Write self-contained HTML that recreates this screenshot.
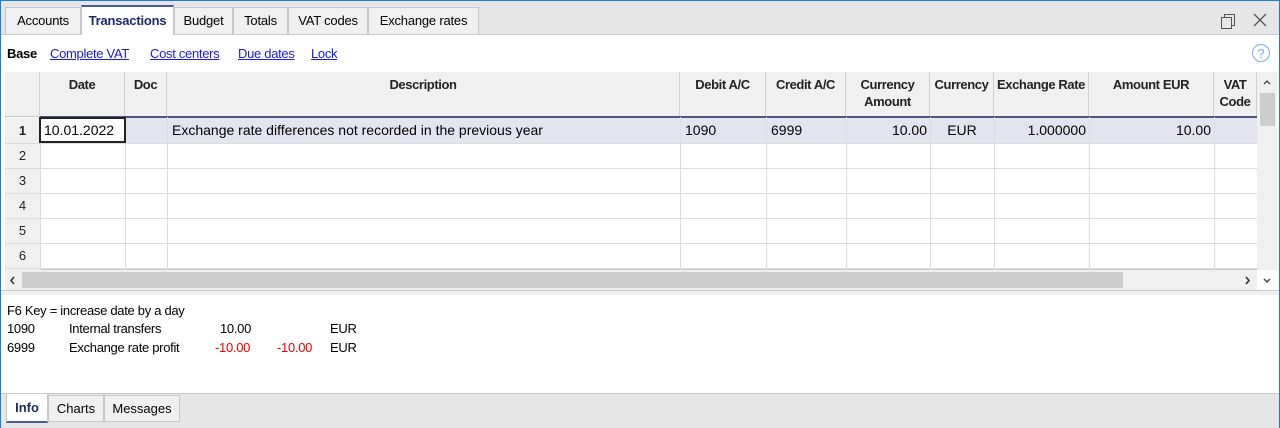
<!DOCTYPE html><html><head><style>
*{box-sizing:border-box;margin:0;padding:0}
body{width:1280px;height:428px;overflow:hidden;background:#fff;font-family:"Liberation Sans",sans-serif;font-size:13px;color:#000;position:relative}
.a{position:absolute}
.frame{left:0;top:0;width:1280px;height:428px;border:1px solid #1e7bd6;border-bottom:none}
.tab{position:absolute;top:7px;height:27px;border:1px solid #c8c8c8;border-bottom:none;background:#f0f0f0;font-size:13px;text-align:center;line-height:26px;letter-spacing:-0.2px}
.h{position:absolute;top:72px;height:45px;background:#f0f0f0;border-right:1px solid #d0d0d0;border-bottom:1px solid #c8c8c8;font-weight:bold;font-size:13px;text-align:center;padding-top:4px;line-height:17px;color:#222;letter-spacing:-0.4px}
.vl{position:absolute;top:117px;height:153px;width:1px;background:#dcdcdc}
.hl{position:absolute;left:5px;width:1252px;height:1px;background:#dcdcdc}
.rn{position:absolute;left:5px;width:35px;text-align:center;font-size:13px;color:#222;background:#f0f0f0}
.c{position:absolute;top:117px;height:26px;line-height:26px;font-size:14px}
.btab{position:absolute;top:395px;height:27px;border:1px solid #c8c8c8;background:#f0f0f0;line-height:25px;text-align:center;font-size:13px}
.i{letter-spacing:-0.3px}
</style></head><body>
<div class="a" style="left:0;top:0;width:1280px;height:35px;background:#e6e6e6;border-bottom:1px solid #c8c8c8"></div>
<div class="tab" style="left:5px;width:76px">Accounts</div>
<div class="tab" style="left:81px;width:93px;background:#fff;top:5px;height:30px;border-top:2px solid #4a5aa0;color:#1b2a6b;font-weight:bold;line-height:28px">Transactions</div>
<div class="tab" style="left:174px;width:59px">Budget</div>
<div class="tab" style="left:233px;width:55px">Totals</div>
<div class="tab" style="left:288px;width:80px">VAT codes</div>
<div class="tab" style="left:368px;width:111px">Exchange rates</div>
<svg class="a" style="left:1220px;top:12px" width="18" height="18"><rect x="1.5" y="5.5" width="10" height="11" fill="none" stroke="#555"/><path d="M4.5 5.5V2.5h10v11h-3" fill="none" stroke="#555"/></svg>
<svg class="a" style="left:1252px;top:12px" width="16" height="16"><path d="M2 2L14 14M14 2L2 14" stroke="#555" stroke-width="1.3"/></svg>
<div class="a i" style="left:7px;top:46px;font-weight:bold">Base</div>
<div class="a i" style="left:50px;top:46px;color:#1a1adc;text-decoration:underline">Complete VAT</div>
<div class="a i" style="left:150px;top:46px;color:#1a1adc;text-decoration:underline">Cost centers</div>
<div class="a i" style="left:238px;top:46px;color:#1a1adc;text-decoration:underline">Due dates</div>
<div class="a i" style="left:311px;top:46px;color:#1a1adc;text-decoration:underline">Lock</div>
<svg class="a" style="left:1251px;top:43px" width="20" height="20"><circle cx="10" cy="10" r="8.5" fill="none" stroke="#7ab0e0"/><text x="10" y="15" font-size="13" text-anchor="middle" fill="#7ab0e0" font-family="Liberation Sans">?</text></svg>
<div class="a" style="left:5px;top:72px;width:1252px;height:198px;border:1px solid #c8c8c8;border-right:none"></div>
<div class="h" style="left:5px;width:35px"></div>
<div class="h" style="left:40px;width:85px">Date</div>
<div class="h" style="left:125px;width:42px">Doc</div>
<div class="h" style="left:167px;width:513px">Description</div>
<div class="h" style="left:680px;width:86px">Debit A/C</div>
<div class="h" style="left:766px;width:80px">Credit A/C</div>
<div class="h" style="left:846px;width:84px">Currency<br>Amount</div>
<div class="h" style="left:930px;width:64px">Currency</div>
<div class="h" style="left:994px;width:95px">Exchange Rate</div>
<div class="h" style="left:1089px;width:125px">Amount EUR</div>
<div class="h" style="left:1214px;width:43px">VAT<br>Code</div>
<div class="a" style="left:40px;top:116px;width:1217px;height:27px;background:#e2e4f0;border-top:2px solid #4a5580"></div>
<div class="rn" style="top:118px;height:25px;line-height:25px;font-weight:bold">1</div>
<div class="rn" style="top:143px;height:25px;line-height:25px">2</div>
<div class="rn" style="top:168px;height:25px;line-height:25px">3</div>
<div class="rn" style="top:193px;height:25px;line-height:25px">4</div>
<div class="rn" style="top:218px;height:25px;line-height:25px">5</div>
<div class="rn" style="top:243px;height:27px;line-height:25px">6</div>
<div class="vl" style="left:40px"></div><div class="vl" style="left:125px"></div><div class="vl" style="left:167px"></div><div class="vl" style="left:680px"></div><div class="vl" style="left:766px"></div><div class="vl" style="left:846px"></div><div class="vl" style="left:930px"></div><div class="vl" style="left:994px"></div><div class="vl" style="left:1089px"></div><div class="vl" style="left:1214px"></div>
<div class="hl" style="top:143px"></div><div class="hl" style="top:168px"></div><div class="hl" style="top:193px"></div><div class="hl" style="top:218px"></div><div class="hl" style="top:243px"></div><div class="hl" style="top:268px"></div>
<div class="a" style="left:39px;top:117px;width:87px;height:26px;border:2px solid #222;background:#fff;font-size:14px;line-height:22px;padding-left:3px">10.01.2022</div>
<div class="c" style="left:172px">Exchange rate differences not recorded in the previous year</div>
<div class="c" style="left:685px">1090</div>
<div class="c" style="left:771px">6999</div>
<div class="c" style="left:846px;width:81px;text-align:right">10.00</div>
<div class="c" style="left:930px;width:64px;text-align:center">EUR</div>
<div class="c" style="left:994px;width:92px;text-align:right">1.000000</div>
<div class="c" style="left:1089px;width:122px;text-align:right">10.00</div>
<div class="a" style="left:1257px;top:72px;width:20px;height:198px;background:#f0f0f0"></div>
<div class="a" style="left:1260px;top:93px;width:15px;height:33px;background:#cdcdcd"></div>
<svg class="a" style="left:1261px;top:78px" width="12" height="8"><path d="M3 6L6 3L9 6" fill="none" stroke="#444" stroke-width="1.3"/></svg>
<svg class="a" style="left:1261px;top:277px" width="12" height="8"><path d="M3 2L6 5L9 2" fill="none" stroke="#444" stroke-width="1.5"/></svg>
<div class="a" style="left:5px;top:270px;width:1252px;height:20px;background:#f0f0f0"></div>
<div class="a" style="left:22px;top:272px;width:1101px;height:16px;background:#cdcdcd"></div>
<svg class="a" style="left:9px;top:275px" width="8" height="12"><path d="M5 2L2 5.5L5 9" fill="none" stroke="#333" stroke-width="1.6"/></svg>
<svg class="a" style="left:1244px;top:275px" width="8" height="12"><path d="M2 2L5 5.5L2 9" fill="none" stroke="#333" stroke-width="1.6"/></svg>
<div class="a" style="left:0;top:290px;width:1280px;height:5px;background:#f0f0f0;border-top:1px solid #c8c8c8"></div>
<div class="a i" style="left:7px;top:303px;font-size:13px">F6 Key = increase date by a day</div>
<div class="a i" style="left:7px;top:321px">1090</div><div class="a i" style="left:69px;top:321px">Internal transfers</div><div class="a i" style="left:220px;top:321px">10.00</div><div class="a i" style="left:330px;top:321px">EUR</div>
<div class="a i" style="left:7px;top:340px">6999</div><div class="a i" style="left:69px;top:340px">Exchange rate profit</div><div class="a i" style="left:215px;top:340px;color:#e00">-10.00</div><div class="a i" style="left:277px;top:340px;color:#e00">-10.00</div><div class="a i" style="left:330px;top:340px">EUR</div>
<div class="a" style="left:0;top:393px;width:1280px;height:35px;background:#e6e6e6;border-top:1px solid #c8c8c8"></div>
<div class="btab" style="left:6px;width:42px;background:#fff;border-top:none;border-bottom:2px solid #4a5aa0;top:394px;height:29px;color:#1b2a6b;font-weight:bold;line-height:28px">Info</div>
<div class="btab" style="left:48px;width:56px">Charts</div>
<div class="btab" style="left:104px;width:76px">Messages</div>
<div class="a frame"></div>
</body></html>
